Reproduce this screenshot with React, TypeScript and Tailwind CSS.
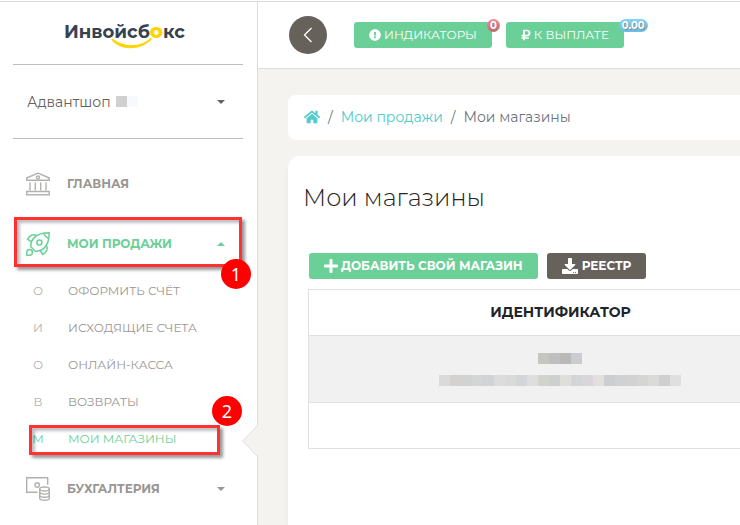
import { FaExclamationCircle, FaRubleSign, FaPlus, FaDownload, FaHome } from 'react-icons/fa'
import type { ReactNode } from 'react'

const salesMenu = [
    { letter: 'О', title: 'ОФОРМИТЬ СЧЁТ' },
    { letter: 'И', title: 'ИСХОДЯЩИЕ СЧЕТА' },
    { letter: 'О', title: 'ОНЛАЙН-КАССА' },
    { letter: 'В', title: 'ВОЗВРАТЫ' },
    { letter: 'М', title: 'МОИ МАГАЗИНЫ', active: true },
]

const maskedName = ['#c6c5c0', '#bfbfbf', '#bab9b7', '#cbccd0']
const maskedId = [
    '#dadada', '#d3d2d0', '#d2d2d2', '#d4d6d5', '#d2d3d5', '#dcdcdc', '#dadad8', '#d4d5d8', '#dedede', '#d2d2cf', '#cecfcf',
    '#dededc', '#d3d5d7', '#d8d6d8', '#e1e0df', '#cccdcf', '#d1d1d2', '#d2d2d2', '#d5d5d5', '#dadad8', '#cfcfcf', '#dfdfdf',
]

function BankIcon() {
    return (
        <svg width="24" height="24" viewBox="0 0 24 24" fill="none" stroke="currentColor" strokeWidth="1.4" className="text-[#b3b1ae]">
            <path d="M.7 8.300V6L12 1.200 23.300 6v2.300z" strokeLinejoin="round" />
            <circle cx="12" cy="5.500" r="1.500" />
            <path d="M4 10.500v8M9.300 10.500v8M14.700 10.500v8M20 10.500v8" />
            <path d="M.7 22.800v-3.300h22.600v3.300z" />
        </svg>
    )
}

function RocketIcon() {
    return (
        <svg width="24" height="24" viewBox="0 0 24 24" fill="none" stroke="currentColor" strokeWidth="1.5" strokeLinejoin="round">
            <path d="M23.200.8C17.500.8 12 1.800 8.400 5.400c-2.600 2.600-3.700 6-3.600 9.400l4.400 4.400c3.400.1 6.800-1 9.400-3.600C22.200 12 23.200 6.500 23.200.8z" />
            <circle cx="13.400" cy="10.600" r="2.500" />
            <path d="M17.800 1.400c.8 2.200 2.600 4 4.800 4.800" />
            <path d="M10.500 3.500C7 1.600 3.500 3.500 1.500 7.200l4 2.600M20.500 13.500c1.900 3.500 0 7-3.700 9l-2.600-4" />
            <path d="M.8 23.200v-2.900a2.800 2.800 0 1 1 2.900 2.900z" />
        </svg>
    )
}

function MoneyIcon() {
    return (
        <svg width="24" height="24" viewBox="0 0 24 24" fill="none" stroke="currentColor" strokeWidth="1.4" className="text-[#b3b1ae]">
            <path d="M11.500 15.300H.7V.7h21v7" />
            <circle cx="11.200" cy="8" r="2.200" />
            <ellipse cx="18.500" cy="12" rx="4.800" ry="2" />
            <path d="M13.700 12v9.300c0 1.100 2.100 2 4.800 2s4.800-.9 4.800-2V12" />
            <path d="M13.700 15.100c0 1.100 2.100 2 4.800 2s4.800-.9 4.800-2M13.700 18.200c0 1.100 2.100 2 4.800 2s4.800-.9 4.800-2" />
        </svg>
    )
}

function Caret({ up }: { up?: boolean }) {
    return (
        <svg width="8" height="4" viewBox="0 0 8 4" fill="currentColor" className="shrink-0">
            {up ? <path d="M0 4l4-4 4 4z" /> : <path d="M0 0h8L4 4z" />}
        </svg>
    )
}

function Mosaic({ colors }: { colors: string[] }) {
    return (
        <div className="flex justify-center">
            {colors.map((color, index) => (
                <span key={index} className="h-[11px] w-[11px]" style={{ backgroundColor: color }}></span>
            ))}
        </div>
    )
}

// callout number shown in a red circle over the menu
function Marker({ className, children }: { className: string, children: ReactNode }) {
    return (
        <span className={`absolute z-20 flex h-[30px] w-[30px] items-center justify-center rounded-full bg-[#fe0000] font-['Noto_Sans',sans-serif] text-lg text-white ${className}`}>
            {children}
        </span>
    )
}

function Frame({ className }: { className: string }) {
    return (
        <span className={`pointer-events-none absolute z-10 border-3 border-[#ff3131] shadow-[3px_3px_3px_rgba(0,0,0,0.4),inset_3px_3px_3px_rgba(0,0,0,0.25)] ${className}`}></span>
    )
}

function Sidebar() {
    return (
        <aside className="w-[258px] shrink-0 border-r border-[#dddddd] bg-white">
            <div className="flex h-[62px] items-center justify-center pr-2 pb-0.5">
                <a href="#" className="relative text-lg leading-6 font-bold text-[#36424f]">
                    Инвойсб<span className="text-xl leading-none font-extrabold text-[#ffd400]">о</span>кс
                    <svg className="absolute top-[18px] left-[47px]" width="42" height="12" viewBox="0 0 42 12">
                        <path d="M0 1.200C9 13 29 13.500 41 1l-1.500-1C29 9.500 13 9.500 1.500.5z" fill="#ffd400" />
                    </svg>
                </a>
            </div>

            <button className="mx-[13px] flex h-[75px] w-[230px] items-center border-y border-[#bdbdbd] pr-[18px] pl-[14px] text-[#66615b]">
                <span className="text-sm">Адвантшоп</span>
                <span className="ml-[5px] h-[11px] w-[11px] bg-[#d0d0d0]"></span>
                <span className="h-[11px] w-[11px] bg-[#f8f9fc]"></span>
                <span className="ml-auto"><Caret /></span>
            </button>

            <nav className="flex flex-col pt-4 text-[#9a9691]">
                <a href="#" className="flex h-[58px] items-center gap-[17px] pl-[26px] text-xs font-bold">
                    <BankIcon /> ГЛАВНАЯ
                </a>

                <div className="relative mt-0.5">
                    <button className="flex h-[58px] w-full items-center gap-[17px] pr-8 pl-[26px] text-xs font-bold text-[#6bd098]">
                        <RocketIcon /> МОИ ПРОДАЖИ
                        <span className="ml-auto"><Caret up /></span>
                    </button>
                    <Frame className="top-[2px] left-[14px] h-[50px] w-[228px]" />
                    <Marker className="top-[44px] left-[221px]">1</Marker>
                </div>

                <ul className="-mt-px">
                    {salesMenu.map((item, index) => (
                        <li key={index} className="relative">
                            <a href="#" className={`flex h-[37px] items-center gap-6 pl-8 text-xs ${item.active ? 'text-[#6bd098]' : ''}`}>
                                <span className={`w-3 text-center ${item.active ? '' : 'text-[#b5b2ae]'}`}>{item.letter}</span>
                                <span>{item.title}</span>
                            </a>
                            {item.active && (
                                <>
                                    <Frame className="top-[5px] left-[29px] h-[30px] w-[191px]" />
                                    <Marker className="-top-6 left-[212px]">2</Marker>
                                    <svg className="absolute top-[5px] -right-px" width="16" height="32" viewBox="0 0 16 32">
                                        <path d="M16 .5L.7 16 16 31.500z" fill="#f4f3ef" />
                                        <path d="M15.500.5L.7 16l14.800 15.500" fill="none" stroke="#dddddd" />
                                    </svg>
                                </>
                            )}
                        </li>
                    ))}
                </ul>

                <button className="mt-[3px] flex h-[58px] items-center gap-[17px] pr-8 pl-[26px] text-xs font-bold">
                    <MoneyIcon /> БУХГАЛТЕРИЯ
                    <span className="ml-auto"><Caret /></span>
                </button>
            </nav>
        </aside>
    )
}

function Header() {
    return (
        <header className="flex h-[67px] items-center border-b border-[#dddddd] bg-white pl-[31px]">
            <button aria-label="Назад" className="flex h-[38px] w-[38px] items-center justify-center rounded-full bg-[#66615b] text-white">
                <svg width="10" height="16" viewBox="0 0 10 16" fill="none" stroke="currentColor" strokeWidth="1.3">
                    <path d="M8.500 1L1.500 8l7 7" />
                </svg>
            </button>
            <button className="relative ml-[27px] flex h-[26px] items-center gap-[3px] rounded-[3px] bg-[#6bd098] px-[15px] text-xs text-white">
                <FaExclamationCircle /> ИНДИКАТОРЫ
                <span className="absolute -top-[3px] -right-2 rounded-full bg-linear-to-b from-[#fa8a99] to-[#c96270] px-[3px] text-[10px] leading-[13px] font-bold [text-shadow:1px_1px_1px_#888]">0</span>
            </button>
            <button className="relative ml-[14px] flex h-[26px] items-center gap-[3px] rounded-[3px] bg-[#6bd098] px-[15px] text-xs text-white">
                <FaRubleSign className="w-[10px]" /> К ВЫПЛАТЕ
                <span className="absolute -top-[3px] left-[113px] rounded-full bg-linear-to-b from-[#7fd4f7] to-[#68bde4] px-[3px] text-[10px] leading-[13px] font-bold [text-shadow:1px_1px_1px_#888]">0.00</span>
            </button>
        </header>
    )
}

function App() {
    return (
        <div className="flex min-h-screen overflow-hidden bg-white pt-px font-['Montserrat','Inter',sans-serif]">
            <div className="flex min-w-0 grow border-t border-[#dddddd]">
                <Sidebar />
                <div className="flex min-w-0 grow flex-col bg-[#f4f3ef]">
                    <Header />
                    <main className="flex grow flex-col gap-4 pt-[26px] pl-[30px]">
                        <nav className="flex h-[45px] items-center gap-2 rounded-l-lg bg-white pb-px pl-4 text-sm text-[#6c757d]">
                            <a href="#" aria-label="Главная" className="text-[#51cbce]"><FaHome className="text-base" /></a>
                            <span>/</span>
                            <a href="#" className="text-[#51cbce]">Мои продажи</a>
                            <span>/</span>
                            <span>Мои магазины</span>
                        </nav>

                        <section className="grow overflow-hidden rounded-tl-xl bg-white pl-5 shadow-[0_6px_10px_-4px_rgba(0,0,0,0.15)]">
                            <h1 className="-ml-[5px] pt-[26px] text-2xl leading-8 font-light text-[#252422]">Мои магазины</h1>
                            <div className="mt-[39px] flex gap-[9px] pl-px text-xs font-bold text-white">
                                <button className="flex h-[26px] items-center gap-[3px] rounded-[3px] bg-[#6bd098] px-[15px]">
                                    <FaPlus className="w-[14px] text-base" /> ДОБАВИТЬ СВОЙ МАГАЗИН
                                </button>
                                <button className="flex h-[26px] items-center gap-1 rounded-[3px] bg-[#66615b] px-[15px]">
                                    <FaDownload className="text-base" /> РЕЕСТР
                                </button>
                            </div>

                            <table className="mt-[10px] w-full border-collapse text-sm text-[#212529]">
                                <thead>
                                    <tr className="h-[46px]">
                                        <th className="min-w-[504px] border border-[#dee2e6] pb-0.5 font-bold">ИДЕНТИФИКАТОР</th>
                                    </tr>
                                </thead>
                                <tbody>
                                    <tr className="h-[67px] bg-[#f1f1f1]">
                                        <td className="border border-[#dee2e6] pr-0.5">
                                            <div className="flex flex-col gap-[11px]">
                                                <Mosaic colors={maskedName} />
                                                <Mosaic colors={maskedId} />
                                            </div>
                                        </td>
                                    </tr>
                                    <tr className="h-[46px]">
                                        <td className="border border-[#dee2e6]"></td>
                                    </tr>
                                </tbody>
                            </table>
                        </section>
                    </main>
                </div>
            </div>
        </div>
    )
}

export default App
